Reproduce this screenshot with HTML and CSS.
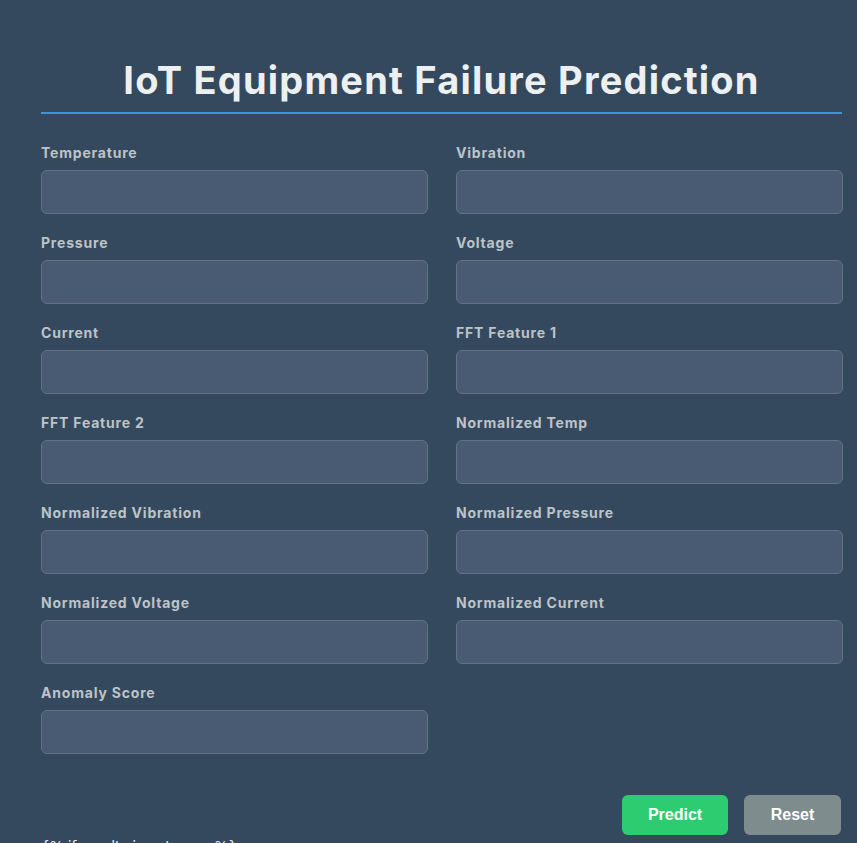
FILE: index.html
```html
<!DOCTYPE html>
<html>
<head>
<meta charset="utf-8">
<link rel="stylesheet" href="styles.css">
</head>
<body>
<div class="container">
  <h1 class="title">IoT Equipment Failure Prediction</h1>
  <form class="form">
    <div class="grid">
      <div class="field"><label>Temperature</label><input type="text"></div>
      <div class="field"><label>Vibration</label><input type="text"></div>
      <div class="field"><label>Pressure</label><input type="text"></div>
      <div class="field"><label>Voltage</label><input type="text"></div>
      <div class="field"><label>Current</label><input type="text"></div>
      <div class="field"><label>FFT Feature 1</label><input type="text"></div>
      <div class="field"><label>FFT Feature 2</label><input type="text"></div>
      <div class="field"><label>Normalized Temp</label><input type="text"></div>
      <div class="field"><label>Normalized Vibration</label><input type="text"></div>
      <div class="field"><label>Normalized Pressure</label><input type="text"></div>
      <div class="field"><label>Normalized Voltage</label><input type="text"></div>
      <div class="field"><label>Normalized Current</label><input type="text"></div>
      <div class="field"><label>Anomaly Score</label><input type="text"></div>
    </div>
    <div class="actions">
      <button type="button" class="btn btn-predict">Predict</button>
      <button type="button" class="btn btn-reset">Reset</button>
    </div>
  </form>
  <p class="template">{% if results is not none %}</p>
</div>
</body>
</html>
```
FILE: styles.css
```css
html, body {
  margin: 0;
  padding: 0;
  background: #34495e;
}
body {
  font-family: "Inter", "Liberation Sans", sans-serif;
  color: #ecf0f1;
}
.container {
  width: 801px;
  margin-left: 41px;
  padding-top: 58px;
}
.title {
  margin: 0;
  text-align: center;
  font-size: 38px;
  font-weight: 700;
  line-height: 44px;
  letter-spacing: 1.2px;
  color: #ecf0f1;
  padding-bottom: 10px;
  border-bottom: 2px solid #3498db;
}
.form {
  margin-top: 30px;
}
.grid {
  display: grid;
  grid-template-columns: 387px 387px;
  column-gap: 28px;
  row-gap: 20px;
}
.field {
  display: flex;
  flex-direction: column;
}
.field label {
  font-size: 14px;
  font-weight: 700;
  letter-spacing: 0.8px;
  color: #bdc3c7;
  line-height: 18px;
  height: 18px;
  margin-bottom: 8px;
}
.field input {
  box-sizing: border-box;
  height: 44px;
  width: 100%;
  border: 1px solid #627389;
  border-radius: 6px;
  background: #485b72;
  color: #ecf0f1;
  font-size: 15px;
  padding: 0 12px;
  outline: none;
}
.actions {
  display: flex;
  justify-content: flex-end;
  gap: 16px;
  margin-top: 41px;
  margin-right: 1px;
}
.btn {
  border: none;
  border-radius: 6px;
  height: 40px;
  color: #fff;
  font-family: "Liberation Sans", Arial, sans-serif;
  font-weight: 700;
  font-size: 16px;
  cursor: pointer;
}
.btn-predict {
  width: 106px;
  background: #2ecc71;
}
.btn-reset {
  width: 97px;
  background: #7f8c8d;
}
.template {
  margin: 3px 0 0;
  font-family: "DejaVu Sans", sans-serif;
  font-size: 14px;
  color: #ecf0f1;
}
```
